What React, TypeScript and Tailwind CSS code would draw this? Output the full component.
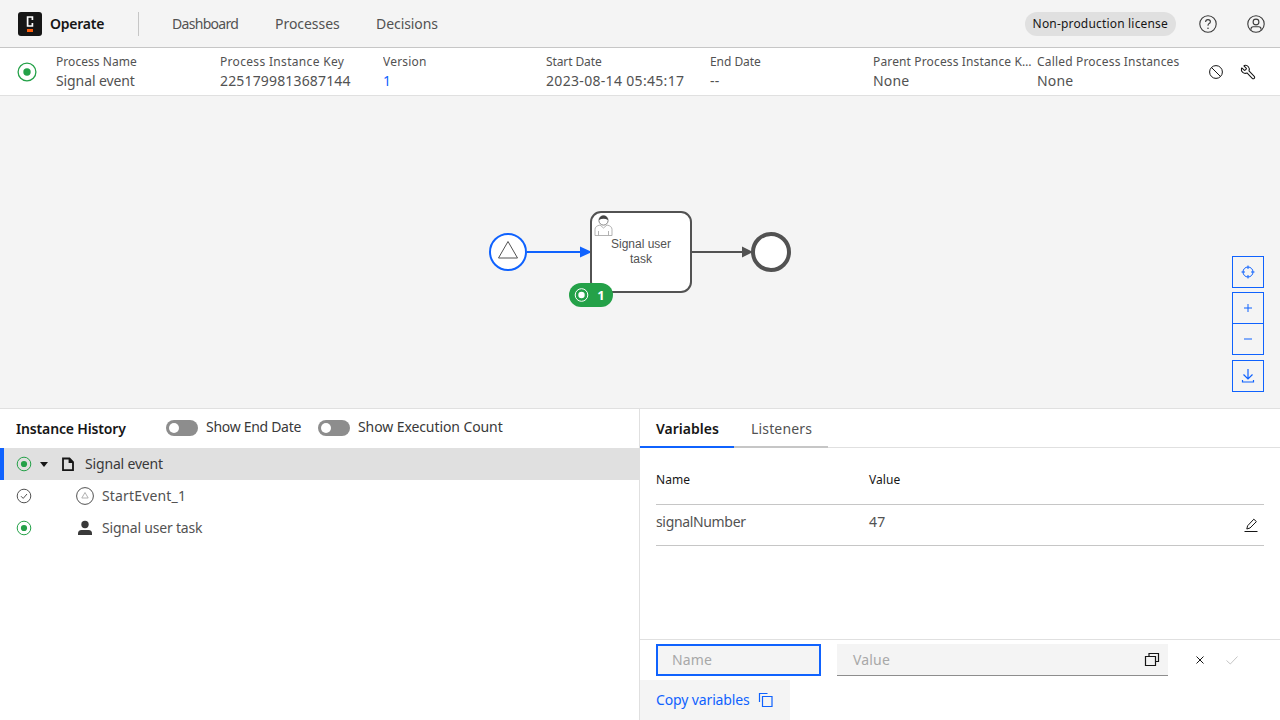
import React from "react";
import { Wrench } from "lucide-react";

const font = "[font-family:'Noto_Sans',sans-serif]";

function Running({ big }: { big?: boolean }) {
  return big ? (
    <svg width="20" height="20" viewBox="0 0 20 20" className="shrink-0">
      <circle cx="10" cy="10" r="8.9" fill="none" stroke="#24a148" strokeWidth="1.3" />
      <circle cx="10" cy="10" r="3.7" fill="#24a148" />
    </svg>
  ) : (
    <svg width="16" height="16" viewBox="0 0 16 16" className="shrink-0">
      <circle cx="8" cy="8" r="6.8" fill="none" stroke="#24a148" strokeWidth="1" />
      <circle cx="8" cy="8" r="3.1" fill="#24a148" />
    </svg>
  );
}

function Detail({ label, value, labelCls = "tracking-[0.2px]", valueCls = "tracking-[0.16px] text-[#525252]" }: { label: string; value: string; labelCls?: string; valueCls?: string }) {
  return (
    <div className="min-w-0">
      <div className={`truncate text-[12px] leading-[16px] text-[#525252] ${labelCls}`}>{label}</div>
      <div className={`mt-[2px] truncate text-[14px] leading-[18px] ${valueCls}`}>{value}</div>
    </div>
  );
}

function Toggle({ label, cls }: { label: string; cls: string }) {
  return (
    <div className="flex items-center gap-2">
      <div className="flex h-4 w-8 items-center rounded-full bg-[#8d8d8d] pl-[3px]">
        <div className="h-[10px] w-[10px] rounded-full bg-white" />
      </div>
      <span className={`mb-[2px] text-[14px] leading-[18px] text-[#393939] ${cls}`}>{label}</span>
    </div>
  );
}

function ZoomBtn({ children, cls = "" }: { children: React.ReactNode; cls?: string }) {
  return (
    <div className={`flex h-8 w-8 items-center justify-center border border-[#0f62fe] bg-[#f4f4f4] ${cls}`}>{children}</div>
  );
}

function Diagram() {
  return (
    <svg width="320" height="115" viewBox="480 200 320 115" className="absolute left-[480px] top-[104px]">
      <circle cx="508" cy="252" r="18" fill="#fff" stroke="#0f62fe" strokeWidth="2" />
      <path d="M508 241.5 L517.5 258 L498.5 258 Z" fill="none" stroke="#525252" strokeWidth="1" />
      <line x1="527" y1="252" x2="582" y2="252" stroke="#0f62fe" strokeWidth="2" />
      <path d="M580 246.5 L592 252 L580 257.5 Z" fill="#0f62fe" />
      <rect x="591" y="212" width="100" height="80" rx="10" fill="#fff" stroke="#525252" strokeWidth="2" />
      <g fill="none" stroke="#aaa" strokeWidth="0.9">
        <path d="M595 235.5 V229.5 Q595 226 600 225 L603.5 228 L607 225 Q612 226 612 229.5 V235.5 Z" fill="#fff" />
        <path d="M598.5 235.5 V231 M608.5 235.5 V231" />
      </g>
      <circle cx="603.5" cy="220.5" r="4.6" fill="#fff" stroke="#666" strokeWidth="0.8" />
      <path d="M598.9 220 Q599.5 215.5 603.5 215.5 Q607.5 215.5 608.1 220 Q603.5 217.5 598.9 220 Z" fill="#444" />
      <text x="641" y="248" textAnchor="middle" fontFamily="'Liberation Sans',sans-serif" fontSize="12" fill="#525252">Signal user</text>
      <text x="641" y="263" textAnchor="middle" fontFamily="'Liberation Sans',sans-serif" fontSize="12" fill="#525252">task</text>
      <line x1="691" y1="252" x2="745" y2="252" stroke="#525252" strokeWidth="2" />
      <path d="M742 246.5 L753 252 L742 257.5 Z" fill="#525252" />
      <circle cx="771" cy="252" r="18" fill="#fff" stroke="#525252" strokeWidth="4" />
      <rect x="569" y="283" width="44" height="24" rx="12" fill="#24a148" />
      <circle cx="581.5" cy="295" r="6.3" fill="none" stroke="#fff" strokeWidth="1" />
      <circle cx="581.5" cy="295" r="3.2" fill="#fff" />
      <text x="601" y="300" textAnchor="middle" fontFamily="'Noto Sans',sans-serif" fontSize="13" fontWeight="700" fill="#fff">1</text>
    </svg>
  );
}

export default function App() {
  return (
    <div className={`flex h-[720px] w-[1280px] flex-col overflow-hidden bg-white ${font}`}>
      {/* top bar */}
      <header className="flex h-12 shrink-0 items-center border-b border-[#c6c6c6] bg-[#f4f4f4] pl-[18px] pr-[14px]">
        <div className="h-6 w-6 rounded-[3px] bg-[#161616]">
          <svg width="24" height="24" viewBox="0 0 24 24">
            <path d="M14.4 8 V5 H9.6 V14 H14.4 V11" fill="none" stroke="#fff" strokeWidth="1.7" />
            <rect x="9" y="17" width="6" height="3" fill="#fc5d0d" />
          </svg>
        </div>
        <span className="ml-2 text-[14px] font-semibold tracking-[-0.25px] text-[#161616]">Operate</span>
        <div className="ml-[34px] h-6 w-px bg-[#c6c6c6]" />
        <nav className="ml-[33px] flex gap-9 text-[14px] text-[#525252]">
          <span className="w-[67px] whitespace-nowrap tracking-[-0.72px]">Dashboard</span>
          <span className="w-[65px] whitespace-nowrap tracking-[-0.06px]">Processes</span>
          <span className="tracking-[-0.1px]">Decisions</span>
        </nav>
        <div className="ml-auto flex h-6 items-center rounded-full bg-[#e0e0e0] px-2 text-[12px] tracking-[0.18px] text-[#161616]">Non-production license</div>
        <svg width="20" height="20" viewBox="0 0 20 20" className="ml-[22px]" fill="none" stroke="#393939">
          <circle cx="10" cy="10" r="8.2" strokeWidth="1.1" />
          <path d="M7.6 8 Q7.6 5.6 10 5.6 Q12.4 5.6 12.4 7.8 Q12.4 9 10.8 9.8 Q10 10.2 10 11.8" strokeWidth="1.1" />
          <circle cx="10" cy="14.2" r="0.8" fill="#393939" stroke="none" />
        </svg>
        <svg width="20" height="20" viewBox="0 0 20 20" className="ml-7" fill="none" stroke="#393939" strokeWidth="1.1">
          <circle cx="10" cy="10" r="8.2" />
          <circle cx="10" cy="8" r="2.9" />
          <path d="M5 15.8 V15 Q5 12.8 7.2 12.8 H12.8 Q15 12.8 15 15 V15.8" />
        </svg>
      </header>

      {/* instance header */}
      <section className="flex h-12 shrink-0 items-center border-b border-[#e0e0e0] bg-white pl-[17px]">
        <Running big />
        <div className="ml-[19px] grid w-[1145px] grid-cols-[164px_163px_163px_164px_163px_164px_164px]">
          <Detail label="Process Name" value="Signal event" labelCls="tracking-[0.05px]" valueCls="tracking-[-0.1px] text-[#525252]" />
          <Detail label="Process Instance Key" value="2251799813687144" labelCls="tracking-[0.32px]" />
          <Detail label="Version" value="1" valueCls="text-[#0f62fe]" />
          <Detail label="Start Date" value="2023-08-14 05:45:17" labelCls="tracking-[-0.1px]" valueCls="tracking-[0.32px] text-[#525252]" />
          <Detail label="End Date" value="--" labelCls="tracking-[-0.05px]" />
          <div className="w-[161px]">
            <Detail label="Parent Process Instance Key" value="None" labelCls="tracking-[0.14px]" />
          </div>
          <Detail label="Called Process Instances" value="None" labelCls="tracking-[0.18px]" />
        </div>
        <svg width="16" height="16" viewBox="0 0 16 16" className="ml-[7px]" fill="none" stroke="#161616" strokeWidth="1">
          <circle cx="8" cy="8" r="6.4" />
          <path d="M3.5 3.5 L12.5 12.5" />
        </svg>
        <Wrench size={16} strokeWidth={1.6} color="#161616" className="ml-4 -scale-x-100" />
      </section>

      {/* diagram */}
      <section className="relative h-[312px] shrink-0 bg-[#f4f4f4]">
        <Diagram />
        <div className="absolute left-[1232px] top-[160px] flex flex-col">
          <ZoomBtn>
            <svg width="16" height="16" viewBox="0 0 16 16" fill="none" stroke="#0f62fe" strokeWidth="1">
              <circle cx="8" cy="8" r="5" />
              <path d="M8 1.5 V5 M8 11 V14.5 M1.5 8 H5 M11 8 H14.5" />
            </svg>
          </ZoomBtn>
          <ZoomBtn cls="mt-1">
            <svg width="16" height="16" viewBox="0 0 16 16" stroke="#0f62fe" strokeWidth="1" className="-mt-px"><path d="M8 4 V12 M4 8 H12" /></svg>
          </ZoomBtn>
          <ZoomBtn cls="-mt-px">
            <svg width="16" height="16" viewBox="0 0 16 16" stroke="#0f62fe" strokeWidth="1"><path d="M4 8 H12" /></svg>
          </ZoomBtn>
          <ZoomBtn cls="mt-[5px]">
            <svg width="16" height="16" viewBox="0 0 16 16" fill="none" stroke="#0f62fe" strokeWidth="1.2">
              <path d="M8 1 V10.5 M3.5 6.5 L8 11 L12.5 6.5 M2.5 12 V14 H13.5 V12" />
            </svg>
          </ZoomBtn>
        </div>
      </section>

      {/* bottom */}
      <section className="flex min-h-0 flex-1 border-t border-[#e0e0e0]">
        <div className="w-[640px] shrink-0 border-r border-[#e0e0e0]">
          <div className="flex h-[39px] items-center pb-px pl-4">
            <span className="w-[150px] text-[14px] font-semibold tracking-[-0.15px] text-[#161616]">Instance History</span>
            <Toggle label="Show End Date" cls="tracking-[-0.3px]" />
            <div className="ml-[17px]"><Toggle label="Show Execution Count" cls="tracking-[-0.09px]" /></div>
          </div>
          <div className="flex h-8 items-center border-l-4 border-[#0f62fe] bg-[#e0e0e0] pl-3">
            <Running />
            <svg width="8" height="5" viewBox="0 0 8 5" className="ml-2"><path d="M0 0 H8 L4 5 Z" fill="#161616" /></svg>
            <svg width="16" height="16" viewBox="0 0 16 16" className="ml-3" fill="none" stroke="#161616" strokeWidth="1.8">
              <path d="M3 2.5 H9.5 L13 6 V14.2 H3 Z M9.5 2.5 V6 H13" />
            </svg>
            <span className="mb-[2px] ml-[9px] text-[14px] tracking-[-0.17px] text-[#393939]">Signal event</span>
          </div>
          <div className="flex h-8 items-center pl-4">
            <svg width="16" height="16" viewBox="0 0 16 16" fill="none" stroke="#525252" strokeWidth="1">
              <circle cx="8" cy="8" r="6.8" />
              <path d="M5 8.2 L7.2 10.4 L11 6" />
            </svg>
            <svg width="18" height="18" viewBox="0 0 18 18" className="ml-[44px]" fill="none">
              <circle cx="9" cy="9" r="8.4" stroke="#525252" strokeWidth="1" />
              <path d="M9 5.5 L12.2 11 H5.8 Z" stroke="#a8a8a8" strokeWidth="0.9" />
            </svg>
            <span className="mb-[2px] ml-2 text-[14px] tracking-[0.16px] text-[#525252]">StartEvent_1</span>
          </div>
          <div className="flex h-8 items-center pl-4">
            <Running />
            <svg width="18" height="18" viewBox="0 0 18 18" className="ml-[44px]" fill="#393939">
              <circle cx="9" cy="5.5" r="3.7" />
              <path d="M2 16 V14.5 Q2 11 5.5 11 H12.5 Q16 11 16 14.5 V16 Z" />
            </svg>
            <span className="mb-[2px] ml-2 text-[14px] tracking-[-0.2px] text-[#525252]">Signal user task</span>
          </div>
        </div>

        <div className="flex min-w-0 flex-1 flex-col">
          <div className="flex h-[39px] shrink-0 border-b border-[#e0e0e0]">
            <div className="flex h-[39px] w-[94px] items-center border-b-2 border-[#0f62fe] pl-4 pt-[2px] text-[14px] font-semibold tracking-[0px] text-[#161616]">Variables</div>
            <div className="flex h-[39px] w-[94px] items-center border-b-2 border-[#c6c6c6] pl-[17px] pt-[2px] text-[14px] tracking-[0.16px] text-[#525252]">Listeners</div>
          </div>
          <div className="flex-1 px-4">
            <div className="flex h-[57px] items-center border-b border-[#c6c6c6] pt-2 text-[12px] tracking-[0.05px] text-[#161616]">
              <span className="w-[213px]">Name</span>
              <span>Value</span>
            </div>
            <div className="flex h-[41px] items-center border-b border-[#c6c6c6] text-[14px] text-[#525252]">
              <span className="mb-2 w-[213px] tracking-[-0.34px]">signalNumber</span>
              <span className="mb-2 tracking-[0.16px]">47</span>
              <svg width="16" height="16" viewBox="0 0 16 16" className="ml-auto mr-[5px]" fill="none" stroke="#161616" strokeWidth="1">
                <path d="M1.5 14.5 H14.5 M3.8 12 L4.6 8.8 L10.8 2.2 L13.4 4.6 L7 11 Z" />
              </svg>
            </div>
          </div>
          <div className="flex h-[41px] shrink-0 items-start border-t border-[#e0e0e0] pl-4 pt-1">
            <div className="flex h-8 w-[165px] items-center border-2 border-[#0f62fe] bg-[#f4f4f4] pb-[2px] pl-[14px] text-[14px] tracking-[0.16px] text-[#a8a8a8]">Name</div>
            <div className="ml-4 flex h-8 w-[331px] items-center border-b border-[#8d8d8d] bg-[#f4f4f4] pl-4 pr-2 text-[14px] tracking-[0.16px] text-[#a8a8a8]">
              <span>Value</span>
              <svg width="16" height="16" viewBox="0 0 16 16" className="ml-auto" fill="none" stroke="#161616" strokeWidth="1.2">
                <path d="M5 4.5 V1.5 H14.5 V9.5 H11.5 M1.5 4.5 H11.5 V13.5 H1.5 Z" />
              </svg>
            </div>
            <svg width="16" height="16" viewBox="0 0 16 16" className="ml-6 mt-2" stroke="#161616" strokeWidth="1"><path d="M4.5 4.5 L11.5 11.5 M11.5 4.5 L4.5 11.5" /></svg>
            <svg width="16" height="16" viewBox="0 0 16 16" className="ml-4 mt-2" fill="none" stroke="#c6c6c6" strokeWidth="1"><path d="M2.5 8.5 L6.3 12 L13.5 4.5" /></svg>
          </div>
          <div className="flex h-10 w-[150px] shrink-0 items-center bg-[#f4f4f4] pl-4 text-[14px] text-[#0f62fe]">
            <span className="mb-[2px] tracking-[-0.13px]">Copy variables</span>
            <svg width="16" height="16" viewBox="0 0 16 16" className="ml-2" fill="none" stroke="#0f62fe" strokeWidth="1.2">
              <path d="M1.5 10 V1.5 H9.5 M4.5 4.5 H14 V14.5 H4.5 Z" />
            </svg>
          </div>
        </div>
      </section>
    </div>
  );
}
